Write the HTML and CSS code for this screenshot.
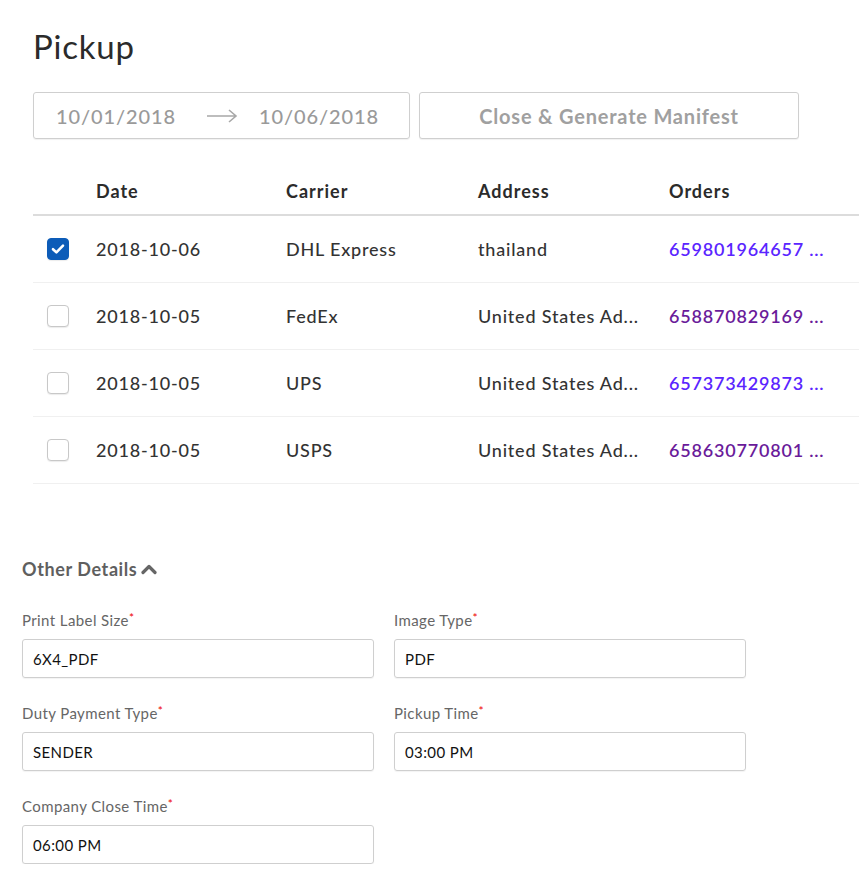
FILE: index.html
```html
<!DOCTYPE html>
<html>
<head>
<meta charset="utf-8">
<link rel="stylesheet" href="styles.css">
</head>
<body>
<div class="page">
  <section class="pickup">
    <h1 class="title">Pickup</h1>
    <div class="toolbar">
      <div class="daterange">
        <span class="date">10/01/2018</span>
        <svg class="arrow" width="32" height="14" viewBox="0 0 32 14"><path d="M1 7H30M23 1L30 7L23 13" fill="none" stroke="#a8a8a8" stroke-width="1.6"/></svg>
        <span class="date">10/06/2018</span>
      </div>
      <button class="btn">Close &amp; Generate Manifest</button>
    </div>
    <div class="table">
      <div class="row head">
        <div class="cell check"></div>
        <div class="cell c-date">Date</div>
        <div class="cell c-carrier">Carrier</div>
        <div class="cell c-addr">Address</div>
        <div class="cell c-orders">Orders</div>
      </div>
      <div class="row">
        <div class="cell check"><span class="cb checked"><svg width="14" height="12" viewBox="0 0 14 12"><path d="M2 6.2L5.4 9.4L12 2.6" fill="none" stroke="#fff" stroke-width="2.6" stroke-linecap="round" stroke-linejoin="round"/></svg></span></div>
        <div class="cell c-date">2018-10-06</div>
        <div class="cell c-carrier">DHL Express</div>
        <div class="cell c-addr">thailand</div>
        <div class="cell c-orders"><a class="link">659801964657 ...</a></div>
      </div>
      <div class="row">
        <div class="cell check"><span class="cb"></span></div>
        <div class="cell c-date">2018-10-05</div>
        <div class="cell c-carrier">FedEx</div>
        <div class="cell c-addr">United States Ad...</div>
        <div class="cell c-orders"><a class="link visited">658870829169 ...</a></div>
      </div>
      <div class="row">
        <div class="cell check"><span class="cb"></span></div>
        <div class="cell c-date">2018-10-05</div>
        <div class="cell c-carrier">UPS</div>
        <div class="cell c-addr">United States Ad...</div>
        <div class="cell c-orders"><a class="link">657373429873 ...</a></div>
      </div>
      <div class="row">
        <div class="cell check"><span class="cb"></span></div>
        <div class="cell c-date">2018-10-05</div>
        <div class="cell c-carrier">USPS</div>
        <div class="cell c-addr">United States Ad...</div>
        <div class="cell c-orders"><a class="link visited">658630770801 ...</a></div>
      </div>
    </div>
  </section>

  <section class="details">
    <h2 class="details-title">Other Details <svg class="chev" width="16" height="12" viewBox="0 0 16 12"><path d="M2 9.5L8 3.5L14 9.5" fill="none" stroke="#666" stroke-width="3.2" stroke-linecap="round" stroke-linejoin="round"/></svg></h2>
    <div class="form">
      <div class="field">
        <label class="label">Print Label Size<span class="req">*</span></label>
        <div class="input">6X4_PDF</div>
      </div>
      <div class="field">
        <label class="label">Image Type<span class="req">*</span></label>
        <div class="input">PDF</div>
      </div>
      <div class="field">
        <label class="label">Duty Payment Type<span class="req">*</span></label>
        <div class="input">SENDER</div>
      </div>
      <div class="field">
        <label class="label">Pickup Time<span class="req">*</span></label>
        <div class="input">03:00 PM</div>
      </div>
      <div class="field">
        <label class="label">Company Close Time<span class="req">*</span></label>
        <div class="input">06:00 PM</div>
      </div>
    </div>
  </section>
</div>
</body>
</html>
```

FILE: styles.css
```css
* { box-sizing: border-box; }
html, body { margin: 0; padding: 0; background: #fff; }
body { font-family: Lato, "Open Sans", sans-serif; color: #333; }

.page { width: 859px; overflow: hidden; }

.pickup { padding: 26px 0 0 33px; }

.title {
  margin: 0;
  font-size: 33px;
  font-weight: 400;
  line-height: 40px;
  color: #2b2b2b;
  letter-spacing: 0.8px;
}

.toolbar {
  display: flex;
  gap: 9px;
  margin-top: 26px;
}

.daterange {
  width: 377px;
  height: 47px;
  border: 1px solid #cfcfcf;
  border-radius: 3px;
  display: flex;
  align-items: center;
  padding-left: 22px;
  box-shadow: 0 1px 1px rgba(0,0,0,0.06);
}
.date { font-size: 20px; color: #9a9a9a; font-weight: 500; letter-spacing: 0.9px; }
.arrow { margin: 0 21px 0 30px; }

.btn {
  width: 380px;
  height: 47px;
  border: 1px solid #cfcfcf;
  border-radius: 3px;
  background: #fff;
  font-family: inherit;
  font-size: 20px;
  font-weight: 700;
  color: #a0a0a0;
  letter-spacing: 0.8px;
  box-shadow: 0 1px 1px rgba(0,0,0,0.06);
}

.table { margin-top: 28px; }
.row {
  display: flex;
  align-items: center;
  height: 67px;
  border-bottom: 1px solid #f0f0f0;
  font-size: 18px;
  letter-spacing: 0.8px;
}
.row.head {
  height: 49px;
  border-bottom: 2px solid #dcdcdc;
  align-items: flex-start;
  padding-top: 13px;
  letter-spacing: 1px;
}
.cell { white-space: nowrap; }
.check { width: 63px; padding-left: 14px; display: flex; align-items: center; }
.c-date { width: 190px; }
.c-carrier { width: 192px; }
.c-addr { width: 191px; }
.c-orders { flex: 1; }
.row:not(.head) .cell { font-weight: 500; }
.row .c-date { font-weight: 600; }
.row.head .cell { font-weight: 700; color: #2b2b2b; }

.cb {
  width: 22px;
  height: 22px;
  border: 1px solid #c8c8c8;
  border-radius: 4px;
  display: flex;
  align-items: center;
  justify-content: center;
  background: #fff;
  box-shadow: 0 1px 1px rgba(0,0,0,0.08);
}
.cb.checked { background: #0d5cb8; border-color: #0d5cb8; }

.link { color: #5a25ff; font-weight: 600; text-decoration: none; }
.link.visited { color: #6a1b9a; }

.details { padding: 72px 0 0 22px; }
.details-title {
  margin: 0;
  font-size: 18px;
  font-weight: 700;
  color: #5f5f5f;
  display: flex;
  align-items: center;
  gap: 4px;
  line-height: 26px;
  letter-spacing: 0.6px;
}
.form {
  display: grid;
  grid-template-columns: 352px 352px;
  column-gap: 20px;
  row-gap: 25px;
  margin-top: 28px;
}
.field { display: flex; flex-direction: column; }
.label {
  font-size: 15px;
  color: #666;
  line-height: 20px;
  margin-bottom: 9px;
  letter-spacing: 0.4px;
}
.req { color: #e00; font-size: 12px; vertical-align: top; position: relative; top: -2px; }
.input {
  height: 39px;
  border: 1px solid #cfcfcf;
  border-radius: 3px;
  padding: 0 10px;
  display: flex;
  align-items: center;
  font-size: 15px;
  color: #111;
  letter-spacing: 0.4px;
  box-shadow: 0 1px 1px rgba(0,0,0,0.05);
}
```
